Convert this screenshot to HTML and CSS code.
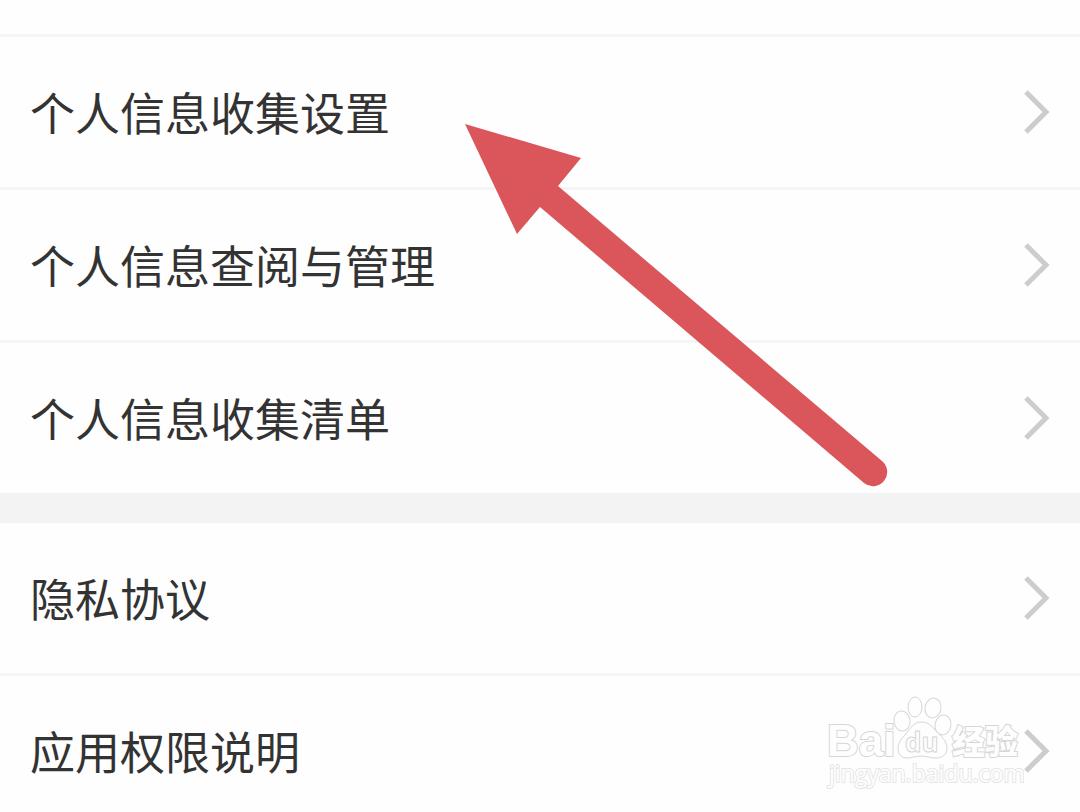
FILE: index.html
```html
<!DOCTYPE html>
<html lang="zh-CN">
<head>
  <meta charset="UTF-8" />
  <meta name="viewport" content="width=device-width, initial-scale=1" />
  <title>隐私设置</title>
  <link rel="stylesheet" href="styles.css">
</head>
<body>
  <main class="page">
    <ul class="group">
      <li><a class="row" href="#collect">个人信息收集设置
        <svg class="chevron" viewBox="0 0 26 44" aria-hidden="true"><path d="M2 2 L22 22 L2 42" /></svg></a></li>
      <li><a class="row" href="#manage">个人信息查阅与管理
        <svg class="chevron" viewBox="0 0 26 44" aria-hidden="true"><path d="M2 2 L22 22 L2 42" /></svg></a></li>
      <li><a class="row" href="#list">个人信息收集清单
        <svg class="chevron" viewBox="0 0 26 44" aria-hidden="true"><path d="M2 2 L22 22 L2 42" /></svg></a></li>
    </ul>
    <ul class="group">
      <li><a class="row" href="#privacy">隐私协议
        <svg class="chevron" viewBox="0 0 26 44" aria-hidden="true"><path d="M2 2 L22 22 L2 42" /></svg></a></li>
      <li><a class="row" href="#permissions">应用权限说明
        <svg class="chevron" viewBox="0 0 26 44" aria-hidden="true"><path d="M2 2 L22 22 L2 42" /></svg></a></li>
    </ul>

    <!-- Arrow pointing at the first row -->
    <svg class="arrow" viewBox="465 124 424 364" aria-hidden="true">
      <path d="M465 124 L581 158 L558 186 L882 461 A14 14 0 0 1 864 483 L540 207 L517 234 Z" />
    </svg>

    <!-- Watermark -->
    <svg class="watermark" viewBox="824 692 200 100">
      <text class="mark-bai" x="827" y="756">Bai</text>
      <g class="paw">
        <ellipse cx="902" cy="721" rx="8" ry="10" transform="rotate(-8 902 721)" />
        <ellipse cx="915" cy="707" rx="7" ry="10" />
        <ellipse cx="933" cy="708" rx="8" ry="10" transform="rotate(10 933 708)" />
        <ellipse cx="943" cy="725" rx="8" ry="10" transform="rotate(10 943 725)" />
        <path d="M921 722 C928 722 932 726 936 731 C941 736 947 741 947 748 C947 755 942 758 936 758 C930 758 926 756 921 756 C916 756 912 758 907 758 C901 758 898 754 898 748 C898 741 904 737 908 731 C912 726 915 722 921 722 Z" />
      </g>
      <text class="mark-du" x="905" y="752">du</text>
      <text class="mark-cn" x="952" y="754">经验</text>
      <text class="mark-url" x="829" y="782">jingyan.baidu.com</text>
    </svg>
  </main>
</body>
</html>
```

FILE: styles.css
```css
body {
  margin: 0;
  background: #fefefe;
  color: #333;
  font-family: "Noto Sans CJK SC", sans-serif;
}
.page {
  position: relative;
  box-sizing: border-box;
  height: 100vh;
  padding-top: 34px;
  overflow: hidden;
}
.group {
  list-style: none;
  margin: 0;
  padding: 0;
}
.group li {
  border-top: 3px solid #f5f5f5;
}
.group + .group {
  border-top: 30px solid #f3f3f3;
}
.group + .group li:first-child {
  border-top: none;
}
.row {
  display: flex;
  align-items: center;
  justify-content: space-between;
  height: 150px;
  padding: 0 30px;
  color: inherit;
  font-size: 45px;
  line-height: 64px;
  text-decoration: none;
}
.chevron {
  width: 26px;
  height: 44px;
  fill: none;
  stroke: #cdcdcd;
  stroke-width: 5;
}
.arrow {
  position: absolute;
  top: 124px;
  left: 465px;
  width: 424px;
  height: 364px;
  fill: #db565b;
  pointer-events: none;
}
.watermark {
  position: absolute;
  right: 56px;
  bottom: 20px;
  width: 200px;
  height: 100px;
  fill: #fefefe;
  stroke: #d6d6d6;
  stroke-width: 1;
  pointer-events: none;
}
.mark-bai {
  font-family: "Liberation Sans", sans-serif;
  font-size: 44px;
  font-weight: bold;
  paint-order: stroke;
  stroke-width: 2;
}
.mark-du {
  font-family: "Open Sans", sans-serif;
  font-size: 26px;
  font-weight: bold;
}
.mark-cn {
  font-size: 33px;
  font-weight: 900;
  paint-order: stroke;
  stroke-width: 2;
}
.mark-url {
  font-family: "Open Sans", sans-serif;
  font-size: 23px;
  paint-order: stroke;
  stroke: #e6e6e6;
  stroke-width: 2;
}
```
